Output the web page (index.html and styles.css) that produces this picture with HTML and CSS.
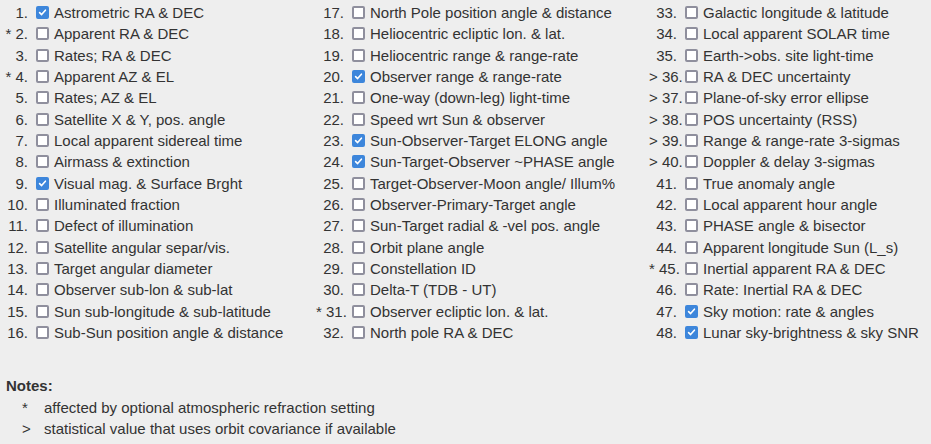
FILE: index.html
```html
<!DOCTYPE html>
<html lang="en">
<head>
    <meta charset="UTF-8">
    <meta name="viewport" content="width=device-width, initial-scale=1.0">
    <title>Table quantities</title>
    <link rel="stylesheet" href="styles.css">
</head>
<body>

    <!-- quantity checkboxes, filled column by column -->
    <div class="quantities">
        <label class="item"><span class="num">1.</span><input type="checkbox" checked><span class="name">Astrometric RA &amp; DEC</span></label>
        <label class="item"><span class="num">* 2.</span><input type="checkbox"><span class="name">Apparent RA &amp; DEC</span></label>
        <label class="item"><span class="num">3.</span><input type="checkbox"><span class="name">Rates; RA &amp; DEC</span></label>
        <label class="item"><span class="num">* 4.</span><input type="checkbox"><span class="name">Apparent AZ &amp; EL</span></label>
        <label class="item"><span class="num">5.</span><input type="checkbox"><span class="name">Rates; AZ &amp; EL</span></label>
        <label class="item"><span class="num">6.</span><input type="checkbox"><span class="name">Satellite X &amp; Y, pos. angle</span></label>
        <label class="item"><span class="num">7.</span><input type="checkbox"><span class="name">Local apparent sidereal time</span></label>
        <label class="item"><span class="num">8.</span><input type="checkbox"><span class="name">Airmass &amp; extinction</span></label>
        <label class="item"><span class="num">9.</span><input type="checkbox" checked><span class="name">Visual mag. &amp; Surface Brght</span></label>
        <label class="item"><span class="num">10.</span><input type="checkbox"><span class="name">Illuminated fraction</span></label>
        <label class="item"><span class="num">11.</span><input type="checkbox"><span class="name">Defect of illumination</span></label>
        <label class="item"><span class="num">12.</span><input type="checkbox"><span class="name">Satellite angular separ/vis.</span></label>
        <label class="item"><span class="num">13.</span><input type="checkbox"><span class="name">Target angular diameter</span></label>
        <label class="item"><span class="num">14.</span><input type="checkbox"><span class="name">Observer sub-lon &amp; sub-lat</span></label>
        <label class="item"><span class="num">15.</span><input type="checkbox"><span class="name">Sun sub-longitude &amp; sub-latitude</span></label>
        <label class="item"><span class="num">16.</span><input type="checkbox"><span class="name">Sub-Sun position angle &amp; distance</span></label>

        <label class="item"><span class="num">17.</span><input type="checkbox"><span class="name">North Pole position angle &amp; distance</span></label>
        <label class="item"><span class="num">18.</span><input type="checkbox"><span class="name">Heliocentric ecliptic lon. &amp; lat.</span></label>
        <label class="item"><span class="num">19.</span><input type="checkbox"><span class="name">Heliocentric range &amp; range-rate</span></label>
        <label class="item"><span class="num">20.</span><input type="checkbox" checked><span class="name">Observer range &amp; range-rate</span></label>
        <label class="item"><span class="num">21.</span><input type="checkbox"><span class="name">One-way (down-leg) light-time</span></label>
        <label class="item"><span class="num">22.</span><input type="checkbox"><span class="name">Speed wrt Sun &amp; observer</span></label>
        <label class="item"><span class="num">23.</span><input type="checkbox" checked><span class="name">Sun-Observer-Target ELONG angle</span></label>
        <label class="item"><span class="num">24.</span><input type="checkbox" checked><span class="name">Sun-Target-Observer ~PHASE angle</span></label>
        <label class="item"><span class="num">25.</span><input type="checkbox"><span class="name">Target-Observer-Moon angle/ Illum%</span></label>
        <label class="item"><span class="num">26.</span><input type="checkbox"><span class="name">Observer-Primary-Target angle</span></label>
        <label class="item"><span class="num">27.</span><input type="checkbox"><span class="name">Sun-Target radial &amp; -vel pos. angle</span></label>
        <label class="item"><span class="num">28.</span><input type="checkbox"><span class="name">Orbit plane angle</span></label>
        <label class="item"><span class="num">29.</span><input type="checkbox"><span class="name">Constellation ID</span></label>
        <label class="item"><span class="num">30.</span><input type="checkbox"><span class="name">Delta-T (TDB - UT)</span></label>
        <label class="item"><span class="num">* 31.</span><input type="checkbox"><span class="name">Observer ecliptic lon. &amp; lat.</span></label>
        <label class="item"><span class="num">32.</span><input type="checkbox"><span class="name">North pole RA &amp; DEC</span></label>

        <label class="item"><span class="num">33.</span><input type="checkbox"><span class="name">Galactic longitude &amp; latitude</span></label>
        <label class="item"><span class="num">34.</span><input type="checkbox"><span class="name">Local apparent SOLAR time</span></label>
        <label class="item"><span class="num">35.</span><input type="checkbox"><span class="name">Earth-&gt;obs. site light-time</span></label>
        <label class="item"><span class="num">&gt; 36.</span><input type="checkbox"><span class="name">RA &amp; DEC uncertainty</span></label>
        <label class="item"><span class="num">&gt; 37.</span><input type="checkbox"><span class="name">Plane-of-sky error ellipse</span></label>
        <label class="item"><span class="num">&gt; 38.</span><input type="checkbox"><span class="name">POS uncertainty (RSS)</span></label>
        <label class="item"><span class="num">&gt; 39.</span><input type="checkbox"><span class="name">Range &amp; range-rate 3-sigmas</span></label>
        <label class="item"><span class="num">&gt; 40.</span><input type="checkbox"><span class="name">Doppler &amp; delay 3-sigmas</span></label>
        <label class="item"><span class="num">41.</span><input type="checkbox"><span class="name">True anomaly angle</span></label>
        <label class="item"><span class="num">42.</span><input type="checkbox"><span class="name">Local apparent hour angle</span></label>
        <label class="item"><span class="num">43.</span><input type="checkbox"><span class="name">PHASE angle &amp; bisector</span></label>
        <label class="item"><span class="num">44.</span><input type="checkbox"><span class="name">Apparent longitude Sun (L_s)</span></label>
        <label class="item"><span class="num">* 45.</span><input type="checkbox"><span class="name">Inertial apparent RA &amp; DEC</span></label>
        <label class="item"><span class="num">46.</span><input type="checkbox"><span class="name">Rate: Inertial RA &amp; DEC</span></label>
        <label class="item"><span class="num">47.</span><input type="checkbox" checked><span class="name">Sky motion: rate &amp; angles</span></label>
        <label class="item"><span class="num">48.</span><input type="checkbox" checked><span class="name">Lunar sky-brightness &amp; sky SNR</span></label>
    </div>

    <!-- legend for the markers -->
    <div class="notes">
        <div class="notes-title">Notes:</div>
        <div class="note"><span class="mark">*</span><span>affected by optional atmospheric refraction setting</span></div>
        <div class="note"><span class="mark">&gt;</span><span>statistical value that uses orbit covariance if available</span></div>
    </div>

</body>
</html>
```

FILE: styles.css
```css
body, html {
    margin: 0;
    background-color: #eeeeee;
    color: #333333;
    font-family: "Liberation Sans", Arial, sans-serif;
    font-size: 15px;
    line-height: 21.33px;
}

.quantities {
    display: grid;
    grid-template-columns: 316px 333px 1fr;
    grid-template-rows: repeat(16, 21.33px);
    grid-auto-flow: column;
    padding-top: 2px;
}

.item {
    display: flex;
    align-items: center;
    white-space: nowrap;
}

.num {
    width: 36px;
    padding-right: 8px;
    box-sizing: border-box;
    text-align: right;
}

.item input {
    appearance: none;
    -webkit-appearance: none;
    width: 13px;
    height: 13px;
    margin: 0 5px 0 0;
    border: 2px solid #8f8f9d;
    border-radius: 2px;
    background-color: #ffffff;
    box-sizing: border-box;
    flex-shrink: 0;
}

.item input:checked {
    border-color: #3d86db;
    background-color: #3d86db;
    /* white tick */
    background-image: url("data:image/svg+xml,%3Csvg xmlns='http://www.w3.org/2000/svg' viewBox='0 0 9 9'%3E%3Cpath d='M1.6 4.6 L3.6 6.6 L7.4 2.2' fill='none' stroke='white' stroke-width='1.6' stroke-linecap='round' stroke-linejoin='round'/%3E%3C/svg%3E");
    background-size: 100% 100%;
}

.notes {
    margin-top: 32px;
    padding-left: 6px;
}

.notes-title {
    font-weight: bold;
}

.note {
    display: flex;
    padding-left: 16px;
}

.note .mark {
    width: 22px;
}
```
